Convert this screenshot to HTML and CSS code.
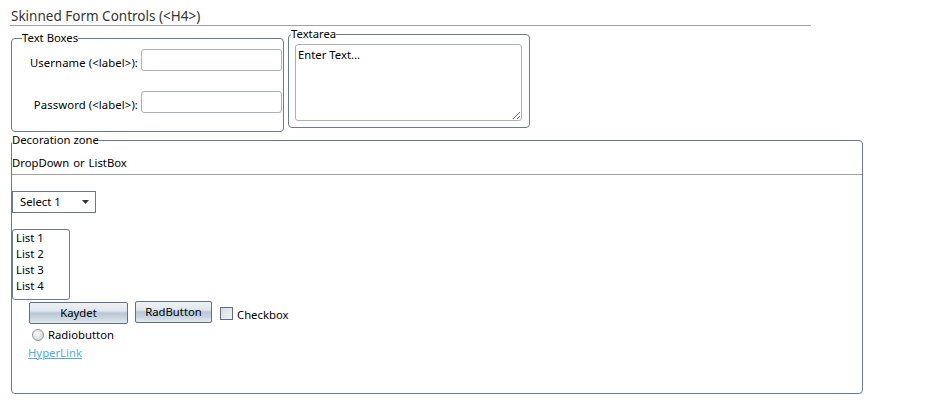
FILE: index.html
```html
<!DOCTYPE html>
<html>
<head>
<meta charset="utf-8">
<title>Skinned Form Controls</title>
<link rel="stylesheet" href="styles.css">
</head>
<body>
<div class="page">
  <h4 class="title">Skinned Form Controls (&lt;H4&gt;)</h4>
  <div class="top">
    <fieldset class="fs textboxes">
      <legend>Text Boxes</legend>
      <div class="grid">
        <label class="lbl">Username (&lt;label&gt;):</label>
        <input class="inp" type="text">
        <label class="lbl">Password (&lt;label&gt;):</label>
        <input class="inp" type="password">
      </div>
    </fieldset>
    <fieldset class="fs textareafs">
      <legend>Textarea</legend>
      <textarea class="ta">Enter Text...</textarea>
    </fieldset>
  </div>
  <fieldset class="fs deco">
    <legend>Decoration zone</legend>
    <div class="ddtitle">DropDown <span class="or">or</span> ListBox</div>
    <div class="select">
      <span>Select 1</span>
      <svg class="arrow" width="7" height="4" viewBox="0 0 7 4"><path d="M0 0H7L3.5 4Z" fill="#333"/></svg>
    </div>
    <div class="listbox">
      <div class="item">List 1</div>
      <div class="item">List 2</div>
      <div class="item">List 3</div>
      <div class="item">List 4</div>
    </div>
    <div class="btnrow">
      <button class="btn kaydet">Kaydet</button>
      <button class="btn radbtn">RadButton</button>
      <span class="check"></span><span class="checklbl">Checkbox</span>
    </div>
    <div class="radiorow">
      <span class="radio"></span><span class="radiolbl">Radiobutton</span>
    </div>
    <a class="link" href="#">HyperLink</a>
  </fieldset>
</div>
</body>
</html>
```
FILE: styles.css
```css
html, body {
  margin: 0;
  padding: 0;
  background: #fff;
}
body {
  font-family: "Noto Sans", "Open Sans", sans-serif;
  font-size: 11.3px;
  line-height: 16px;
  color: #000;
}
.page {
  padding: 8px 0 0 10px;
}
.title {
  margin: 0;
  width: 800px;
  font-size: 13.5px;
  font-weight: normal;
  line-height: 16px;
  color: #333;
  padding: 0 0 1px 1px;
  border-bottom: 1px solid #a0a0a0;
}
.top {
  display: flex;
  align-items: flex-start;
}
.fs {
  border: 1px solid #6b7b8f;
  border-radius: 4px;
  margin: 0;
  box-sizing: border-box;
}
.fs legend {
  padding: 0;
  line-height: 16px;
}
.textboxes {
  width: 273px;
  height: 102px;
  margin: 4px 0 0 1px;
  padding: 0 0 0 10px;
}
.grid {
  display: grid;
  grid-template-columns: 116px 141px;
  column-gap: 3px;
  row-gap: 20px;
  align-items: end;
  margin-top: 3px;
}
.lbl {
  text-align: right;
  line-height: 16px;
  letter-spacing: 0.1px;
}
.inp {
  box-sizing: border-box;
  width: 141px;
  height: 22px;
  margin: 0;
  border: 1px solid #abb1b9;
  border-radius: 3px;
  font: inherit;
  padding: 0 3px;
}
.textareafs {
  width: 242px;
  height: 102px;
  margin-left: 4px;
  padding: 0 0 0 6px;
}
.textareafs legend {
  margin-left: -4px;
}
.ta {
  box-sizing: border-box;
  display: block;
  width: 227px;
  height: 77px;
  margin-top: 2px;
  border: 1px solid #abb1b9;
  border-radius: 3px;
  font: inherit;
  padding: 2px 2px;
  resize: both;
}
.deco {
  width: 852px;
  height: 262px;
  margin: 0 0 0 1px;
  padding: 0;
}
.ddtitle {
  padding: 7px 0 3px 0;
  border-bottom: 1px solid #a0a0a0;
}
.or {
  margin: 0 1px;
}
.select {
  box-sizing: border-box;
  width: 84px;
  height: 22px;
  margin: 16px 0 0 0;
  border: 1px solid #6b7b8f;
  display: flex;
  align-items: center;
  justify-content: space-between;
  padding: 0 6px 0 7px;
}
.listbox {
  box-sizing: border-box;
  width: 58px;
  height: 71px;
  margin: 16px 0 0 0;
  border: 1px solid #6b7b8f;
  border-radius: 3px;
  padding: 0 0 0 3px;
}
.btnrow {
  display: flex;
  align-items: flex-start;
  margin: 1px 0 0 17px;
}
.btn {
  box-sizing: border-box;
  height: 22px;
  margin: 0;
  padding: 0;
  border: 1px solid #5f7186;
  border-radius: 2px;
  font: inherit;
  color: #000;
  background: linear-gradient(#eef2f5 0%, #dfe6ec 40%, #b9c8d5 50%, #c9d5df 75%, #e3e9ee 100%);
}
.kaydet {
  width: 99px;
  margin-top: 1px;
}
.radbtn {
  width: 77px;
  margin-left: 7px;
}
.check {
  box-sizing: border-box;
  width: 13px;
  height: 13px;
  margin: 6px 0 0 8px;
  border: 1px solid #5f6f80;
  background: linear-gradient(135deg, #d7dce2, #f1f3f5);
}
.checklbl {
  margin: 6px 0 0 4px;
}
.radiorow {
  display: flex;
  align-items: center;
  margin: 3px 0 0 20px;
}
.radio {
  box-sizing: border-box;
  width: 12px;
  height: 12px;
  border-radius: 50%;
  border: 1px solid #8e9399;
  background: radial-gradient(circle at 40% 35%, #f6f7f8, #cfd3d7);
}
.radiolbl {
  margin-left: 4px;
}
.link {
  display: inline-block;
  margin: 2px 0 0 16px;
  color: #4fb0d8;
  text-decoration: underline;
}
```
